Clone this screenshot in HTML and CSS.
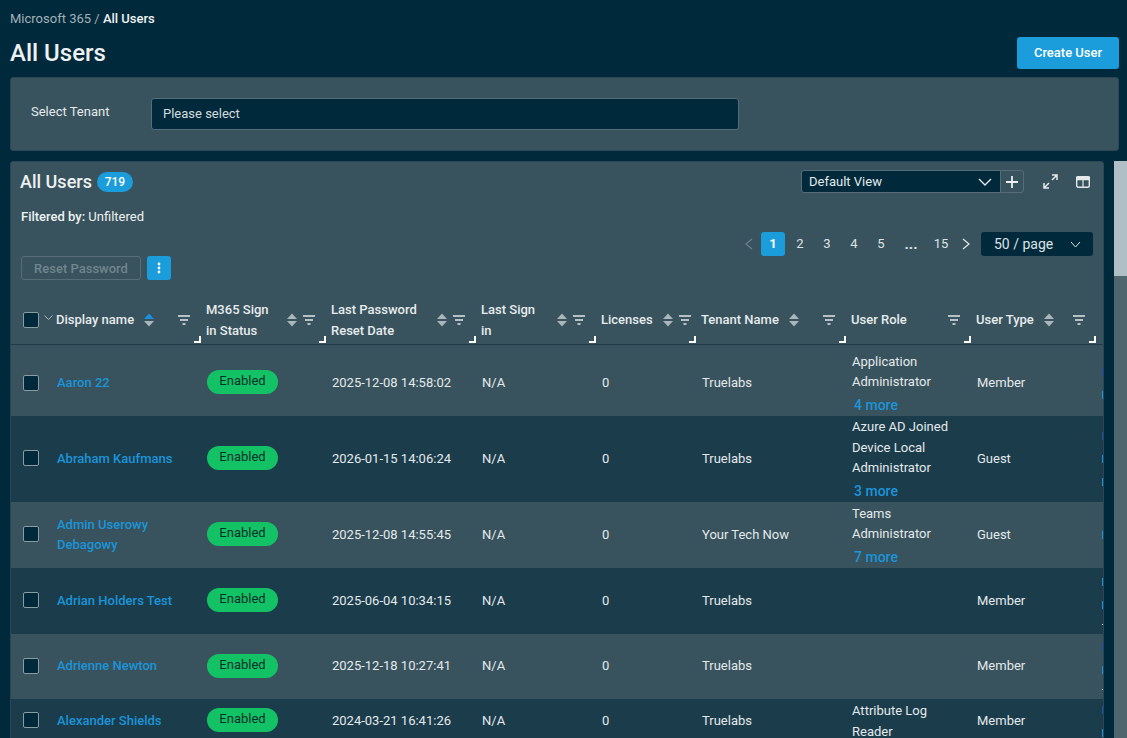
FILE: index.html
```html
<!DOCTYPE html>
<html lang="en">

<head>
  <meta charset="UTF-8">
  <title>All Users</title>
  <link rel="stylesheet" href="styles.css">
</head>

<body>
  <svg class="defs" width="0" height="0">
    <symbol id="sort" viewBox="0 0 10 14"><path d="M5 0.500l5 5.500H0z" /><path d="M0 8h10l-5 5.500z" /></symbol>
    <symbol id="sort-asc" viewBox="0 0 10 14"><path fill="#1a8fe0" d="M5 0.500l5 5.500H0z" /><path d="M0 8h10l-5 5.500z" /></symbol>
    <symbol id="filter" viewBox="0 0 12 10"><path d="M0 1h12M2 5h8M4.500 9h3" fill="none" stroke="currentColor" stroke-width="1.500" /></symbol>
  </svg>

  <div class="breadcrumb">Microsoft 365 / <b>All Users</b></div>
  <div class="page-head">
    <h1>All Users</h1>
    <button class="btn-create">Create User</button>
  </div>

  <div class="tenant-card">
    <label>Select Tenant</label>
    <div class="tenant-select">Please select</div>
  </div>

  <div class="table-area">
    <div class="table-card">
      <div class="card-head">
        <h2>All Users</h2>
        <span class="count">719</span>
        <div class="view-tools">
          <div class="view-select">Default View
            <svg width="14" height="8" viewBox="0 0 14 8"><path d="M1 1l6 6 6-6" fill="none" stroke="currentColor" stroke-width="1.400" /></svg>
          </div>
          <button class="view-add">
            <svg width="12" height="12" viewBox="0 0 12 12"><path d="M6 0v12M0 6h12" stroke="currentColor" stroke-width="1.800" /></svg>
          </button>
          <svg class="tool-expand" width="15" height="15" viewBox="0 0 15 15"><path d="M9 1h5v5M14 1L9 6M6 14H1V9M1 14l5-5" fill="none" stroke="currentColor" stroke-width="1.500" /></svg>
          <svg class="tool-cols" width="14" height="12" viewBox="0 0 14 12"><rect x="0.700" y="0.700" width="12.600" height="10.600" rx="1.500" fill="none" stroke="currentColor" stroke-width="1.400" /><path d="M0.700 1h12.600v2.600H0.700zM7 3v8" fill="currentColor" stroke="currentColor" stroke-width="1.200" /></svg>
        </div>
      </div>

      <div class="filtered"><b>Filtered by:</b> Unfiltered</div>

      <div class="pager">
        <svg class="pg-arrow dim" width="9" height="12" viewBox="0 0 9 12"><path d="M8 1L2 6l6 5" fill="none" stroke="currentColor" stroke-width="1.200" /></svg>
        <span class="pg active">1</span>
        <span class="pg">2</span>
        <span class="pg">3</span>
        <span class="pg">4</span>
        <span class="pg">5</span>
        <span class="pg dots">...</span>
        <span class="pg">15</span>
        <svg class="pg-arrow next" width="9" height="12" viewBox="0 0 9 12"><path d="M1 1l6 5-6 5" fill="none" stroke="currentColor" stroke-width="1.200" /></svg>
        <div class="pg-size">50 / page
          <svg width="11" height="7" viewBox="0 0 11 7"><path d="M1 1l4.500 5L10 1" fill="none" stroke="currentColor" stroke-width="1" /></svg>
        </div>
      </div>

      <div class="bulk">
        <button class="btn-reset" disabled>Reset Password</button>
        <button class="btn-more">
          <svg width="4" height="12" viewBox="0 0 4 12" fill="currentColor"><circle cx="2" cy="2" r="1.400" /><circle cx="2" cy="6" r="1.400" /><circle cx="2" cy="10" r="1.400" /></svg>
        </button>
      </div>

      <table>
        <colgroup>
          <col class="c-check"><col class="c-name"><col class="c-125"><col class="c-150"><col class="c-120"><col class="c-100"><col class="c-150"><col class="c-125"><col class="c-125"><col class="c-120">
        </colgroup>
        <thead>
          <tr>
            <th class="check-th">
              <span class="box"></span>
              <svg class="th-caret" width="9" height="5" viewBox="0 0 9 5"><path d="M0.500 0.500l4 4 4-4" fill="none" stroke="currentColor" /></svg>
            </th>
            <th class="name-th"><div class="th"><span>Display name</span><svg class="sort"><use href="#sort-asc" /></svg><svg class="filter"><use href="#filter" /></svg></div></th>
            <th><div class="th"><span>M365 Sign in Status</span><svg class="sort"><use href="#sort" /></svg><svg class="filter"><use href="#filter" /></svg></div></th>
            <th><div class="th"><span>Last Password Reset Date</span><svg class="sort"><use href="#sort" /></svg><svg class="filter"><use href="#filter" /></svg></div></th>
            <th><div class="th"><span>Last Sign in</span><svg class="sort"><use href="#sort" /></svg><svg class="filter"><use href="#filter" /></svg></div></th>
            <th><div class="th"><span>Licenses</span><svg class="sort"><use href="#sort" /></svg><svg class="filter"><use href="#filter" /></svg></div></th>
            <th><div class="th"><span>Tenant Name</span><svg class="sort"><use href="#sort" /></svg><svg class="filter"><use href="#filter" /></svg></div></th>
            <th><div class="th"><span>User Role</span><svg class="filter"><use href="#filter" /></svg></div></th>
            <th><div class="th"><span>User Type</span><svg class="sort"><use href="#sort" /></svg><svg class="filter"><use href="#filter" /></svg></div></th>
            <th class="last-th"></th>
          </tr>
        </thead>
        <tbody>
          <tr class="row-72">
            <td class="check-td"><span class="box"></span></td>
            <td class="name-td"><a href="#" class="user">Aaron 22</a></td>
            <td><span class="pill">Enabled</span></td>
            <td>2025-12-08 14:58:02</td>
            <td>N/A</td>
            <td>0</td>
            <td>Truelabs</td>
            <td class="role-td">Application Administrator<a href="#" class="more">4 more</a></td>
            <td>Member</td>
            <td><div class="marks"><i class="navy"></i><i class="sky"></i></div></td>
          </tr>
          <tr class="row-86">
            <td class="check-td"><span class="box"></span></td>
            <td class="name-td"><a href="#" class="user">Abraham Kaufmans</a></td>
            <td><span class="pill">Enabled</span></td>
            <td>2026-01-15 14:06:24</td>
            <td>N/A</td>
            <td>0</td>
            <td>Truelabs</td>
            <td class="role-td">Azure AD Joined Device Local Administrator<a href="#" class="more">3 more</a></td>
            <td>Guest</td>
            <td><div class="marks"><i class="navy"></i><i class="sky"></i><i class="sky"></i></div></td>
          </tr>
          <tr class="row-66">
            <td class="check-td"><span class="box"></span></td>
            <td class="name-td"><a href="#" class="user">Admin Userowy Debagowy</a></td>
            <td><span class="pill">Enabled</span></td>
            <td>2025-12-08 14:55:45</td>
            <td>N/A</td>
            <td>0</td>
            <td>Your Tech Now</td>
            <td class="role-td">Teams Administrator<a href="#" class="more">7 more</a></td>
            <td>Guest</td>
            <td><div class="marks"><i class="sky"></i></div></td>
          </tr>
          <tr class="row-66">
            <td class="check-td"><span class="box"></span></td>
            <td class="name-td"><a href="#" class="user">Adrian Holders Test</a></td>
            <td><span class="pill">Enabled</span></td>
            <td>2025-06-04 10:34:15</td>
            <td>N/A</td>
            <td>0</td>
            <td>Truelabs</td>
            <td class="role-td"></td>
            <td>Member</td>
            <td><div class="marks"><i class="sky"></i><i class="sky"></i><i class="dot"></i></div></td>
          </tr>
          <tr class="row-65">
            <td class="check-td"><span class="box"></span></td>
            <td class="name-td"><a href="#" class="user">Adrienne Newton</a></td>
            <td><span class="pill">Enabled</span></td>
            <td>2025-12-18 10:27:41</td>
            <td>N/A</td>
            <td>0</td>
            <td>Truelabs</td>
            <td class="role-td"></td>
            <td>Member</td>
            <td><div class="marks"><i class="navy"></i><i class="sky"></i><i class="dot"></i></div></td>
          </tr>
          <tr class="row-44">
            <td class="check-td"><span class="box"></span></td>
            <td class="name-td"><a href="#" class="user">Alexander Shields</a></td>
            <td><span class="pill">Enabled</span></td>
            <td>2024-03-21 16:41:26</td>
            <td>N/A</td>
            <td>0</td>
            <td>Truelabs</td>
            <td class="role-td">Attribute Log Reader</td>
            <td>Member</td>
            <td><div class="marks"><i class="navy"></i><i class="sky"></i></div></td>
          </tr>
        </tbody>
      </table>
    </div>

    <div class="scrollbar"><div class="scroll-thumb"></div></div>
  </div>
</body>

</html>
```

FILE: styles.css
```css
* {
  box-sizing: border-box;
  margin: 0;
  padding: 0;
  font-family: Roboto, "Liberation Sans", sans-serif;
}

html,
body {
  height: 738px;
  overflow: hidden;
}

body {
  background-color: #00293b;
  color: #e8edef;
  font-size: 13px;
  padding: 10px 8px 0 10px;
}

.defs {
  position: absolute;
}

button {
  border: none;
}

.breadcrumb {
  color: #a3b1b8;
  font-size: 13px;
  line-height: 17px;
}

.breadcrumb b {
  color: #eef2f3;
  font-weight: 500;
}

.page-head {
  display: flex;
  justify-content: space-between;
  align-items: center;
  height: 32px;
  margin: 10px 0 8px;
}

.page-head h1 {
  font-size: 24px;
  font-weight: 500;
  color: #eef1f2;
}

.btn-create {
  width: 102px;
  height: 32px;
  padding-bottom: 2px;
  background-color: #1b9cdb;
  color: white;
  border-radius: 3px;
  font-size: 13px;
  font-weight: 500;
}

.tenant-card {
  display: flex;
  height: 74px;
  padding: 20px 20px 0;
  background-color: #38535d;
  border: 1px solid #2b4755;
  border-radius: 3px;
}

.tenant-card label {
  width: 120px;
  line-height: 28px;
  color: #e4e9eb;
}

.tenant-select {
  width: 588px;
  height: 32px;
  padding-left: 11px;
  line-height: 30px;
  background-color: #00293b;
  border: 1px solid #566d78;
  border-radius: 3px;
  color: #d5dcdf;
}

.table-area {
  display: flex;
  gap: 10px;
  margin-top: 10px;
  margin-right: -8px;
}

.table-card {
  width: 1094px;
  height: 600px;
  overflow: hidden;
  background-color: #38535d;
  border: 1px solid #2b4755;
  border-radius: 3px 3px 0 0;
}

.scrollbar {
  width: 13px;
  height: 577px;
  background-color: #50666f;
}

.scroll-thumb {
  height: 115px;
  background-color: #b0bfc5;
}

.card-head {
  display: flex;
  align-items: center;
  height: 23px;
  margin: 8px 0 0 9px;
}

.card-head h2 {
  font-size: 18px;
  font-weight: 500;
  color: #eef1f2;
}

.count {
  margin-left: 5px;
  width: 36px;
  height: 20px;
  line-height: 20px;
  border-radius: 10px;
  background-color: #1b9cdb;
  color: white;
  font-size: 12px;
  font-weight: 500;
  text-align: center;
}

.view-tools {
  display: flex;
  align-items: center;
  margin-left: auto;
  color: #e4e9eb;
}

.view-select {
  display: flex;
  justify-content: space-between;
  align-items: center;
  width: 200px;
  height: 23px;
  padding: 0 8px 0 7px;
  background-color: #00293b;
  border: 1px solid #566d78;
  border-radius: 3px 0 0 3px;
  font-size: 13px;
}

.view-add {
  display: flex;
  align-items: center;
  justify-content: center;
  width: 24px;
  height: 23px;
  margin-left: -1px;
  background: none;
  color: #eef1f2;
  border: 1px solid #566d78;
  border-radius: 0 3px 3px 0;
}

.tool-expand {
  margin-left: 19px;
}

.tool-cols {
  margin: 0 13px 0 18px;
}

.filtered {
  margin: 16px 0 0 10px;
  font-size: 13px;
  line-height: 16px;
  color: #eef1f2;
}

.filtered b {
  font-weight: 500;
}

.pager {
  display: flex;
  justify-content: flex-end;
  align-items: center;
  height: 24px;
  margin: 7px 10px 0 0;
  color: #dce3e6;
}

.pg {
  width: 24px;
  height: 24px;
  margin-right: 3px;
  line-height: 24px;
  text-align: center;
  border-radius: 3px;
}

.pg.active {
  background-color: #1b9cdb;
  color: white;
  font-weight: 700;
}

.pg.dots {
  font-size: 15px;
  font-weight: 700;
  margin: 0 6px 0 3px;
}

.pg-arrow {
  margin-right: 8px;
  color: #e4e9eb;
}

.pg-arrow.dim {
  color: #6b808a;
}

.pg-arrow.next {
  margin: 0 10px 0 6px;
}

.pg-size {
  display: flex;
  justify-content: space-between;
  align-items: center;
  width: 112px;
  height: 24px;
  padding: 0 12px 0 13px;
  background-color: #00293b;
  border-radius: 3px;
  font-size: 14px;
}

.bulk {
  display: flex;
  gap: 6px;
  margin: 0 0 15px 10px;
}

.btn-reset {
  width: 120px;
  height: 24px;
  background: none;
  border: 1px solid #566d78;
  border-radius: 3px;
  color: #71858f;
  font-size: 13px;
  font-weight: 500;
}

.btn-more {
  display: flex;
  align-items: center;
  justify-content: center;
  width: 24px;
  height: 24px;
  background-color: #1b9cdb;
  color: white;
  border-radius: 3px;
}

table {
  width: 1124px;
  table-layout: fixed;
  border-collapse: collapse;
}

.c-check { width: 40px; }
.c-name { width: 149px; }
.c-100 { width: 100px; }
.c-120 { width: 120px; }
.c-125 { width: 125px; }
.c-150 { width: 150px; }

thead tr {
  height: 49px;
  border-bottom: 1px solid #1f3a49;
}

th {
  position: relative;
  padding: 1px 10px 0 6px;
  text-align: left;
  font-size: 13px;
  font-weight: 500;
  line-height: 21px;
  color: #e6ebed;
}

th::after {
  content: "";
  position: absolute;
  right: -1px;
  bottom: 1px;
  width: 5px;
  height: 5px;
  border-right: 2px solid white;
  border-bottom: 2px solid white;
}

.check-th {
  padding: 0;
  white-space: nowrap;
}

.check-th::after,
.last-th::after {
  display: none;
}

.name-th {
  padding-left: 5px;
}

.th {
  display: flex;
  align-items: center;
}

.sort {
  flex: none;
  width: 10px;
  height: 14px;
  margin: 0 6px 0 10px;
  fill: #a9b6bb;
}

.filter {
  flex: none;
  width: 12px;
  height: 10px;
  margin-left: auto;
  color: #dfe5e8;
}

.box {
  display: inline-block;
  width: 16px;
  height: 16px;
  margin-left: 12px;
  background-color: #00293b;
  border: 1px solid #8a9ba3;
  border-radius: 2px;
  vertical-align: middle;
}

.th-caret {
  margin-left: 2px;
  color: #a9b6bb;
  vertical-align: 4px;
}

tbody tr:nth-child(odd) {
  background-color: #38535d;
}

tbody tr:nth-child(even) {
  background-color: #1b3c4b;
}

.row-72 { height: 72px; }
.row-86 { height: 86px; }
.row-66 { height: 66px; }
.row-65 { height: 65px; }
.row-44 { height: 44px; }

td {
  padding: 0 12px 0 7px;
  line-height: 20.500px;
  color: #e4e9eb;
}

.row-72 td {
  padding-top: 6px;
}

.check-td {
  padding: 0 0 2px;
}

.row-72 .check-td {
  padding: 4px 0 0;
}

.role-td {
  padding-top: 1px;
}

.row-72 .role-td {
  padding-top: 7px;
}

.name-td {
  padding-left: 6px;
}

.user {
  color: #1b94d9;
  font-weight: 500;
  text-decoration: none;
}

.more {
  display: block;
  margin: 1px 0 0 2px;
  color: #1b94d9;
  font-size: 14px;
  font-weight: 500;
  line-height: 22px;
  text-decoration: none;
}

.pill {
  display: inline-block;
  width: 71px;
  height: 24px;
  margin-bottom: 2px;
  line-height: 22px;
  border-radius: 12px;
  background-color: #14c266;
  color: #06302a;
  text-align: center;
}

.marks {
  display: flex;
  flex-direction: column;
  gap: 15px;
}

.marks i {
  display: block;
  width: 8px;
  height: 8px;
}

.marks .navy {
  background-color: #1f4fa8;
}

.marks .sky {
  background-color: #1b94d9;
}

.marks .dot {
  height: 1px;
  background-color: #e4e9eb;
}
```
